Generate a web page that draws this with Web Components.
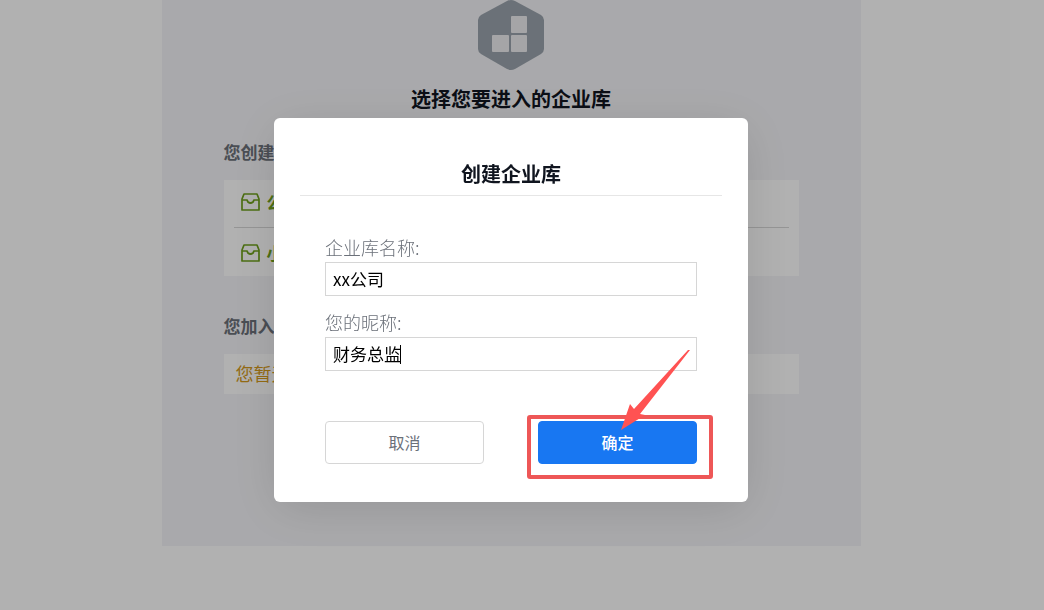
<!DOCTYPE html>
<html lang="zh-CN">
<head>
  <meta charset="utf-8">
  <meta name="viewport" content="width=device-width, initial-scale=1">
  <title>创建企业库</title>
  <style>
    * {
      box-sizing: border-box;
    }
    body {
      margin: 0;
      min-height: 100vh;
      background: #fefefe;
      color: #10151f;
      font-family: "Noto Sans CJK SC", sans-serif;
      font-size: 17px;
      line-height: 24px;
      --gutter: 22px;
      --muted: #6b7079;
      --line: #d6d6d6;
      --primary: #1877f2;
      --mark: #ee5757;
    }
  </style>
</head>
<body>
  <library-panel>
    <span slot="title">选择您要进入的企业库</span>
    <library-section heading="您创建">
      <library-item>公</library-item>
      <library-item>小</library-item>
    </library-section>
    <library-section heading="您加入">
      <empty-note>您暂无</empty-note>
    </library-section>
  </library-panel>

  <create-dialog>
    <span slot="title">创建企业库</span>
    <text-field label="企业库名称:" value="xx公司"></text-field>
    <text-field label="您的昵称:" value="财务总监" active></text-field>
    <action-button slot="actions">取消</action-button>
    <action-button slot="actions" primary marked>确定</action-button>
  </create-dialog>

  <script>
    class BaseElement extends HTMLElement {
      constructor() {
        super();
        this.attachShadow({ mode: 'open' });
      }
      connectedCallback() {
        const template = document.createElement('template');
        template.innerHTML = `
          <style>
            * {
              box-sizing: border-box;
              margin: 0;
              padding: 0;
            }
            ${this.getStyles()}
          </style>
          ${this.getTemplate()}
        `;
        this.shadowRoot.replaceChildren(template.content.cloneNode(true));
      }
    }

    class LibraryPanel extends BaseElement {
      getTemplate() {
        return `
          <main>
            <svg width="68" height="71" viewBox="0 0 68 71" aria-hidden="true">
              <path d="M30 1 Q34 -1 38 1 L64 15 Q67 17 67 20 V49 Q67 52 64 54 L38 69 Q34 71 30 69 L4 54 Q1 52 1 49 V20 Q1 17 4 15 Z" fill="#9aa3ad"/>
              <g fill="#ececef">
                <rect x="34" y="16" width="16" height="17" rx="1"/>
                <rect x="15" y="35" width="17" height="17" rx="1"/>
                <rect x="34" y="35" width="16" height="17" rx="1"/>
              </g>
            </svg>
            <h1><slot name="title"></slot></h1>
            <div class="sections"><slot></slot></div>
          </main>
        `;
      }
      getStyles() {
        return `
          :host {
            display: block;
            padding-right: var(--gutter);
          }
          main {
            max-width: 699px;
            min-height: 546px;
            margin: 0 auto;
            padding: 0 62px;
            background: #f3f3f6;
            display: flex;
            flex-direction: column;
            align-items: center;
          }
          h1 {
            margin-top: 13px;
            font-size: 20px;
            line-height: 30px;
          }
          .sections {
            align-self: stretch;
            display: flex;
            flex-direction: column;
            gap: 38px;
            margin-top: 26px;
          }
        `;
      }
    }

    class LibrarySection extends BaseElement {
      getTemplate() {
        return `
          <section>
            <h2>${this.getAttribute('heading')}</h2>
            <div class="list"><slot></slot></div>
          </section>
        `;
      }
      getStyles() {
        return `
          :host {
            display: block;
          }
          h2 {
            font-size: 17px;
            line-height: 24px;
            color: var(--muted);
            margin-bottom: 16px;
          }
          .list {
            background: #fefefe;
            padding: 0 10px;
          }
        `;
      }
    }

    class LibraryItem extends BaseElement {
      getTemplate() {
        return `
          <a href="#">
            <svg width="19" height="18" viewBox="0 0 19 18" fill="none" stroke="currentColor" stroke-width="1.7" stroke-linejoin="round" aria-hidden="true">
              <path d="M1 17 V6 L3 1 H16 L18 6 V17 Z"/>
              <path d="M1 7 H6 L7 9 Q9.5 11 12 9 L13 7 H18"/>
            </svg>
            <slot></slot>
          </a>
        `;
      }
      getStyles() {
        return `
          :host {
            display: block;
          }
          :host(:not(:last-child)) {
            border-bottom: 1px solid var(--line);
          }
          a {
            display: flex;
            align-items: center;
            gap: 7px;
            padding: 10px 7px 13px;
            color: #6fa01c;
            font-weight: 700;
            text-decoration: none;
          }
          :host(:last-child) a {
            padding: 13px 7px 11px;
          }
        `;
      }
    }

    class EmptyNote extends BaseElement {
      getTemplate() {
        return `<p><slot></slot></p>`;
      }
      getStyles() {
        return `
          :host {
            display: block;
          }
          p {
            padding: 7px 2px 9px;
            font-size: 18px;
            color: #d49a1c;
          }
        `;
      }
    }

    class CreateDialog extends BaseElement {
      getTemplate() {
        return `
          <form role="dialog" aria-modal="true" aria-labelledby="title">
            <h2 id="title"><slot name="title"></slot></h2>
            <div class="fields"><slot></slot></div>
            <div class="actions"><slot name="actions"></slot></div>
          </form>
        `;
      }
      getStyles() {
        return `
          :host {
            position: fixed;
            inset: 0;
            display: grid;
            place-items: center;
            padding: 10px var(--gutter) 0 0;
            background: rgba(0, 0, 0, 0.3);
          }
          form {
            width: 100%;
            max-width: 474px;
            padding: 41px 26px 38px;
            background: #fff;
            border-radius: 6px;
            box-shadow: 0 8px 50px rgba(0, 0, 0, 0.12);
          }
          h2 {
            padding-bottom: 6px;
            border-bottom: 1px solid #e6e6e6;
            font-size: 20px;
            line-height: 30px;
            text-align: center;
          }
          .fields {
            display: flex;
            flex-direction: column;
            gap: 14px;
            padding: 39px 25px 0;
          }
          .actions {
            display: grid;
            grid-template-columns: 1fr 1fr;
            gap: 54px;
            padding: 50px 25px 0;
          }
        `;
      }
    }

    class TextField extends BaseElement {
      getTemplate() {
        return `
          <label for="input">${this.getAttribute('label')}</label>
          <div class="box">
            <input id="input" type="text" value="${this.getAttribute('value')}">
            ${this.hasAttribute('active') ? '<i class="caret"></i>' : ''}
          </div>
        `;
      }
      getStyles() {
        return `
          :host {
            display: block;
          }
          label {
            display: block;
            color: var(--muted);
            font-size: 18px;
            font-weight: 300;
            line-height: 24px;
            padding-bottom: 3px;
          }
          .box {
            position: relative;
          }
          input {
            display: block;
            width: 100%;
            height: 34px;
            padding: 0 7px 2px;
            border: 1px solid var(--line);
            background: #fff;
            color: #000;
            font: inherit;
            outline: none;
          }
          .caret {
            position: absolute;
            left: calc(4em + 7px);
            top: 8px;
            width: 1px;
            height: 19px;
            background: #000;
          }
        `;
      }
    }

    class ActionButton extends BaseElement {
      getTemplate() {
        return `
          <button type="button"><slot></slot></button>
          ${this.hasAttribute('marked') ? this.getMark() : ''}
        `;
      }
      // frame around the button with an arrow pointing at it
      getMark() {
        return `
          <svg class="mark" width="186" height="130" viewBox="0 0 186 130" aria-hidden="true">
            <rect x="2" y="68" width="182" height="60" rx="1" fill="none" stroke="var(--mark)" stroke-width="4"/>
            <path d="M94 81 L103 55 L107 60 L161 1 L163 1 L113 65 L118 66 Z" fill="#ff5252"/>
          </svg>
        `;
      }
      getStyles() {
        return `
          :host {
            display: block;
            position: relative;
          }
          button {
            display: block;
            width: 100%;
            height: 43px;
            padding-bottom: 2px;
            border: 1px solid var(--line);
            border-radius: 4px;
            background: #fff;
            color: var(--muted);
            font: inherit;
            font-size: 16px;
            cursor: pointer;
          }
          :host([primary]) button {
            border-color: var(--primary);
            background: var(--primary);
            color: #fff;
            font-weight: 500;
          }
          .mark {
            position: absolute;
            right: -16px;
            bottom: -15px;
            pointer-events: none;
          }
        `;
      }
    }

    customElements.define('library-panel', LibraryPanel);
    customElements.define('library-section', LibrarySection);
    customElements.define('library-item', LibraryItem);
    customElements.define('empty-note', EmptyNote);
    customElements.define('create-dialog', CreateDialog);
    customElements.define('text-field', TextField);
    customElements.define('action-button', ActionButton);
  </script>
</body>
</html>
